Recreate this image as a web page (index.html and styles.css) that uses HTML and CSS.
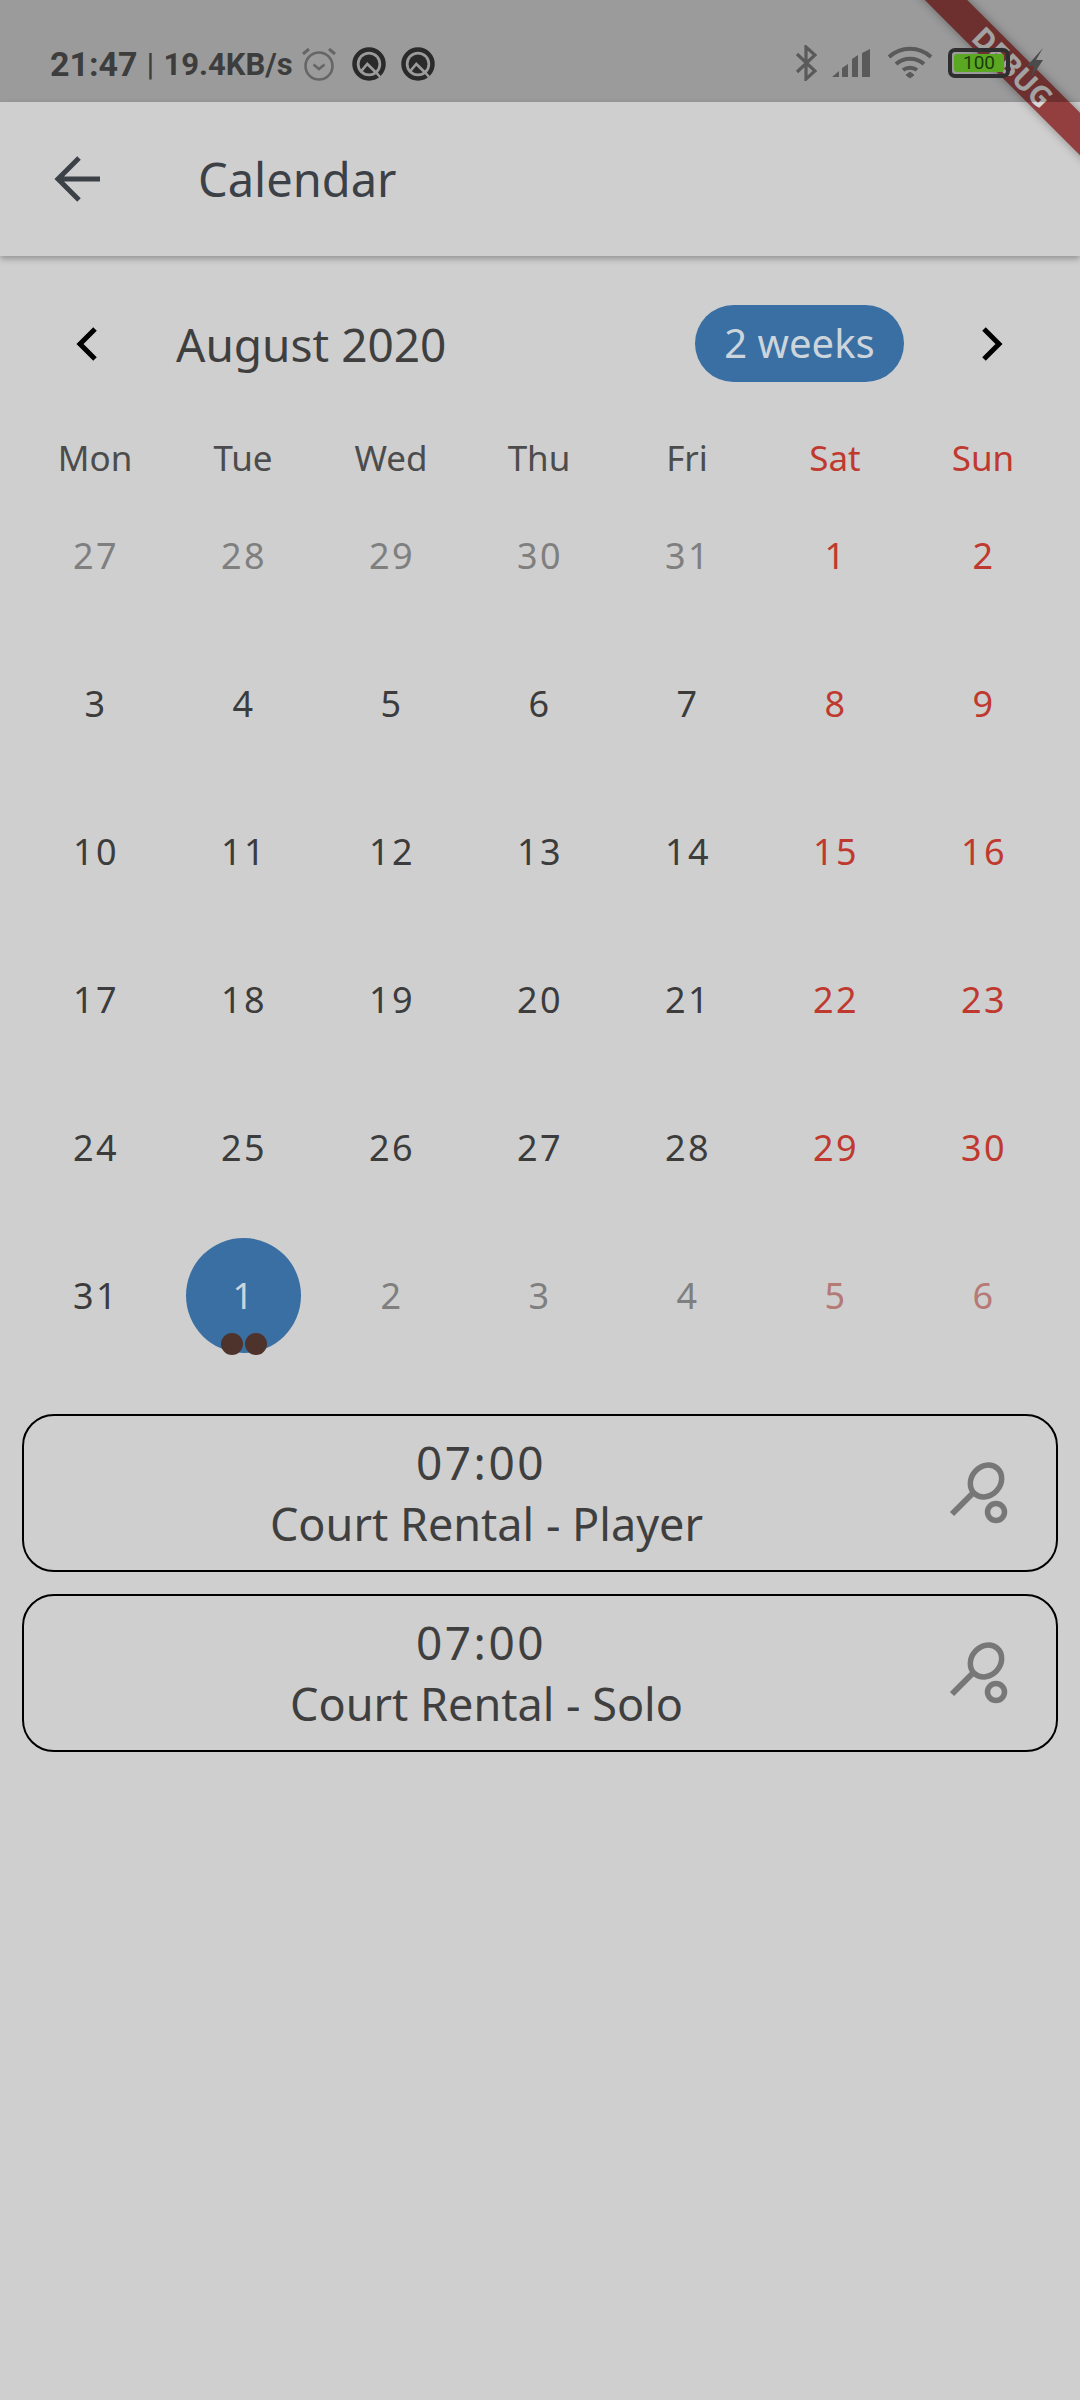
FILE: index.html
```html
<!DOCTYPE html>
<html lang="en">
<head>
    <meta charset="UTF-8">
    <meta name="viewport" content="width=device-width, initial-scale=1.0">
    <title>Calendar</title>
    <link rel="stylesheet" href="styles.css">
</head>
<body>
    <div class="debug-banner"><span>DEBUG</span></div>

    <div class="status-bar">
        <div class="status-left">
            <span class="clock">21:47</span><span class="sep">|</span><span class="speed">19.4KB/s</span>
            <svg class="alarm" width="36" height="36" viewBox="0 0 36 36" fill="none" stroke="#666" stroke-width="2.6">
                <circle cx="18" cy="20" r="13.5"/>
                <path d="M12.5 18.5l5.5 4.5 5.5-4.5"/>
                <path d="M2 8l6-5M34 8l-6-5" stroke-width="3"/>
            </svg>
            <svg class="ring" width="34" height="34" viewBox="0 0 34 34">
                <circle cx="17" cy="17" r="14.500" fill="none" stroke="#2a2a2a" stroke-width="4.500"/>
                <circle cx="17" cy="17" r="9.500" fill="#2a2a2a"/>
                <path d="M8.500 25L15.300 17 25 26.500" fill="none" stroke="#9b9b9b" stroke-width="2.600"/>
                <path d="M23 24l5 6" stroke="#9b9b9b" stroke-width="2.500"/>
            </svg>
            <svg class="ring" width="34" height="34" viewBox="0 0 34 34">
                <circle cx="17" cy="17" r="14.500" fill="none" stroke="#2a2a2a" stroke-width="4.500"/>
                <circle cx="17" cy="17" r="9.500" fill="#2a2a2a"/>
                <path d="M8.500 25L15.300 17 25 26.500" fill="none" stroke="#9b9b9b" stroke-width="2.600"/>
                <path d="M23 24l5 6" stroke="#9b9b9b" stroke-width="2.500"/>
            </svg>
        </div>
        <div class="status-right">
            <svg width="22" height="36" viewBox="0 0 22 36" fill="none" stroke="#5a5a5a" stroke-width="3.200">
                <path d="M2 9l18 17-9 8V2l9 8L2 27"/>
            </svg>
            <svg class="signal" width="42" height="30" viewBox="0 0 42 30" fill="#5a5a5a">
                <path d="M1 29l7-6v6zM11 29V20l6-4v13zM21 29V11l6-4v22zM31 29V5l8-4v28z"/>
            </svg>
            <svg class="wifi" width="46" height="34" viewBox="0 0 46 34" fill="none" stroke="#5a5a5a" stroke-width="4">
                <path d="M2 11c12-11 30-11 42 0M9 18c8-7 20-7 28 0M16 24c4-3 10-3 14 0"/>
                <path d="M19 29l4-3 4 3-4 3z" fill="#5a5a5a" stroke-width="1"/>
            </svg>
            <div class="battery"><span>100</span></div>
            <svg class="bolt" width="18" height="30" viewBox="0 0 18 30" fill="#4b4b4b">
                <path d="M17 0L1 18h7L5 30l12-18h-7z"/>
            </svg>
        </div>
    </div>

    <div class="app-bar">
        <svg class="back" width="48" height="46" viewBox="0 0 48 46" fill="none" stroke="#3c4148" stroke-width="5">
            <path d="M47 23H5M26 2L5 23l21 21"/>
        </svg>
        <div class="app-title">Calendar</div>
    </div>

    <div class="calendar">
        <div class="nav">
            <svg class="chev chev-left" width="22" height="34" viewBox="0 0 22 34" fill="none" stroke="#000" stroke-width="5">
                <path d="M19 2L4 17l15 15"/>
            </svg>
            <div class="month">August 2020</div>
            <div class="pill">2 weeks</div>
            <svg class="chev chev-right" width="22" height="34" viewBox="0 0 22 34" fill="none" stroke="#000" stroke-width="5">
                <path d="M3 2l15 15L3 32"/>
            </svg>
        </div>

        <div class="weekdays">
            <div>Mon</div><div>Tue</div><div>Wed</div><div>Thu</div><div>Fri</div><div class="red">Sat</div><div class="red">Sun</div>
        </div>

        <div class="days">
            <div class="muted">27</div><div class="muted">28</div><div class="muted">29</div><div class="muted">30</div><div class="muted">31</div><div class="red">1</div><div class="red">2</div>
            <div>3</div><div>4</div><div>5</div><div>6</div><div>7</div><div class="red">8</div><div class="red">9</div>
            <div>10</div><div>11</div><div>12</div><div>13</div><div>14</div><div class="red">15</div><div class="red">16</div>
            <div>17</div><div>18</div><div>19</div><div>20</div><div>21</div><div class="red">22</div><div class="red">23</div>
            <div>24</div><div>25</div><div>26</div><div>27</div><div>28</div><div class="red">29</div><div class="red">30</div>
            <div>31</div>
            <div><span class="selected">1<i class="dots"><b></b><b></b></i></span></div>
            <div class="muted">2</div><div class="muted">3</div><div class="muted">4</div><div class="faded">5</div><div class="faded">6</div>
        </div>
    </div>

    <div class="events">
        <div class="card">
            <div class="card-text">
                <div class="time">07:00</div>
                <div>Court Rental - Player</div>
            </div>
            <svg class="racket" width="64" height="68" viewBox="0 0 64 68" fill="none" stroke="#777" stroke-width="5.500">
                <ellipse cx="39" cy="22" rx="14.500" ry="17" transform="rotate(42 39 22)"/>
                <path d="M27 33L5 55" stroke-width="6"/>
                <circle cx="49" cy="53" r="8.500"/>
            </svg>
        </div>
        <div class="card">
            <div class="card-text">
                <div class="time">07:00</div>
                <div>Court Rental - Solo</div>
            </div>
            <svg class="racket" width="64" height="68" viewBox="0 0 64 68" fill="none" stroke="#777" stroke-width="5.500">
                <ellipse cx="39" cy="22" rx="14.500" ry="17" transform="rotate(42 39 22)"/>
                <path d="M27 33L5 55" stroke-width="6"/>
                <circle cx="49" cy="53" r="8.500"/>
            </svg>
        </div>
    </div>
</body>
</html>
```
FILE: styles.css
```css
html, body {
    margin: 0;
    height: 2400px;
    overflow: hidden;
}

body {
    position: relative;
    background-color: #cfcfcf;
    font-family: "Noto Sans", sans-serif;
    color: #3f3f3f;
}

.status-bar {
    position: relative;
    z-index: 3;
    height: 102px;
    box-sizing: border-box;
    padding: 44px 36px 0 50px;
    display: flex;
    justify-content: space-between;
    align-items: flex-start;
    background-color: rgba(0, 0, 0, 0.25);
}

.status-left {
    display: flex;
    align-items: center;
    height: 40px;
    font-family: Roboto, sans-serif;
    font-size: 31px;
    font-weight: 700;
    color: #3d3d3d;
}

.clock {
    font-size: 34px;
}

.sep {
    font-weight: 400;
    font-size: 32px;
    margin: 0 9px 0 9px;
}

.alarm {
    margin-left: 8px;
}

.ring {
    margin-left: 15px;
}

.status-right {
    display: flex;
    align-items: center;
    height: 40px;
    margin-top: -1px;
}

.signal {
    margin-left: 14px;
}

.wifi {
    margin-left: 14px;
}

.battery {
    box-sizing: border-box;
    width: 62px;
    height: 30px;
    margin-left: 15px;
    border: 4px solid #2e2e2e;
    border-radius: 7px;
    padding: 2px;
    display: flex;
}

.battery span {
    flex: 1;
    background-color: #5aa822;
    border-radius: 3px;
    font-family: Roboto, sans-serif;
    font-size: 19px;
    font-weight: 400;
    line-height: 18px;
    text-align: center;
    color: #1c3c0a;
}

.bolt {
    margin-left: 16px;
}

.app-bar {
    position: relative;
    z-index: 1;
    height: 154px;
    padding-left: 54px;
    display: flex;
    align-items: center;
    background-color: #cfcfcf;
    box-shadow: 0 3px 6px rgba(0, 0, 0, 0.28);
}

.back {
    margin-left: -1px;
}

.app-title {
    margin-left: 97px;
    font-size: 47px;
    color: #3c4148;
}

.calendar {
    padding: 49px 21px 0;
}

.nav {
    height: 77px;
    display: flex;
    align-items: center;
}

.chev-left {
    margin-left: 55px;
}

.month {
    margin-left: 78px;
    font-size: 46px;
    flex: 1;
}

.pill {
    width: 209px;
    height: 77px;
    border-radius: 39px;
    background-color: #3a6fa3;
    color: #cdd5dc;
    font-size: 40px;
    line-height: 75px;
    text-align: center;
}

.chev-right {
    margin-left: 77px;
    margin-right: 56px;
}

.weekdays {
    margin-top: 56px;
    height: 40px;
    display: grid;
    grid-template-columns: repeat(7, 148px);
    text-align: center;
    font-size: 35px;
    line-height: 40px;
    color: #4c4c4c;
}

.days {
    margin-top: 3px;
    display: grid;
    grid-template-columns: repeat(7, 148px);
    grid-auto-rows: 148px;
    font-size: 36px;
    letter-spacing: 2.500px;
    color: #3c3c3c;
}

.days > div {
    display: flex;
    align-items: center;
    justify-content: center;
    padding-left: 2px;
}

.weekdays .red,
.days .red {
    color: #c0392f;
}

.days .muted {
    color: #7f7f7f;
}

.days .faded {
    color: #b57a76;
}

.selected {
    position: relative;
    width: 115px;
    height: 115px;
    margin-left: -2px;
    border-radius: 50%;
    background-color: #3a6fa3;
    color: #cdd5dc;
    text-indent: 2px;
    display: flex;
    align-items: center;
    justify-content: center;
}

.dots {
    position: absolute;
    left: 35px;
    bottom: -2px;
    display: flex;
    gap: 2px;
}

.dots b {
    width: 22px;
    height: 22px;
    border-radius: 50%;
    background-color: #4d332c;
}

.events {
    margin: 45px 22px 0 22px;
    display: flex;
    flex-direction: column;
    gap: 22px;
}

.card {
    box-sizing: border-box;
    height: 158px;
    border: 2px solid #000;
    border-radius: 32px;
    display: flex;
    align-items: center;
    padding-right: 45px;
}

.card-text {
    flex: 1;
    padding-right: 2px;
    text-align: center;
    font-size: 45px;
    line-height: 61px;
}

.time {
    padding-right: 11px;
    font-size: 46px;
    letter-spacing: 2.500px;
}

.racket {
    margin-left: -4px;
}

.debug-banner {
    position: absolute;
    z-index: 2;
    top: 52px;
    left: 893px;
    width: 240px;
    height: 30px;
    transform: rotate(45deg);
    background-color: #933f3f;
    box-shadow: 0 0 10px rgba(0, 0, 0, 0.35);
    text-align: center;
    font-family: "Noto Sans", sans-serif;
    font-size: 29px;
    font-weight: 700;
    line-height: 30px;
    color: #d8d8d8;
}
```
